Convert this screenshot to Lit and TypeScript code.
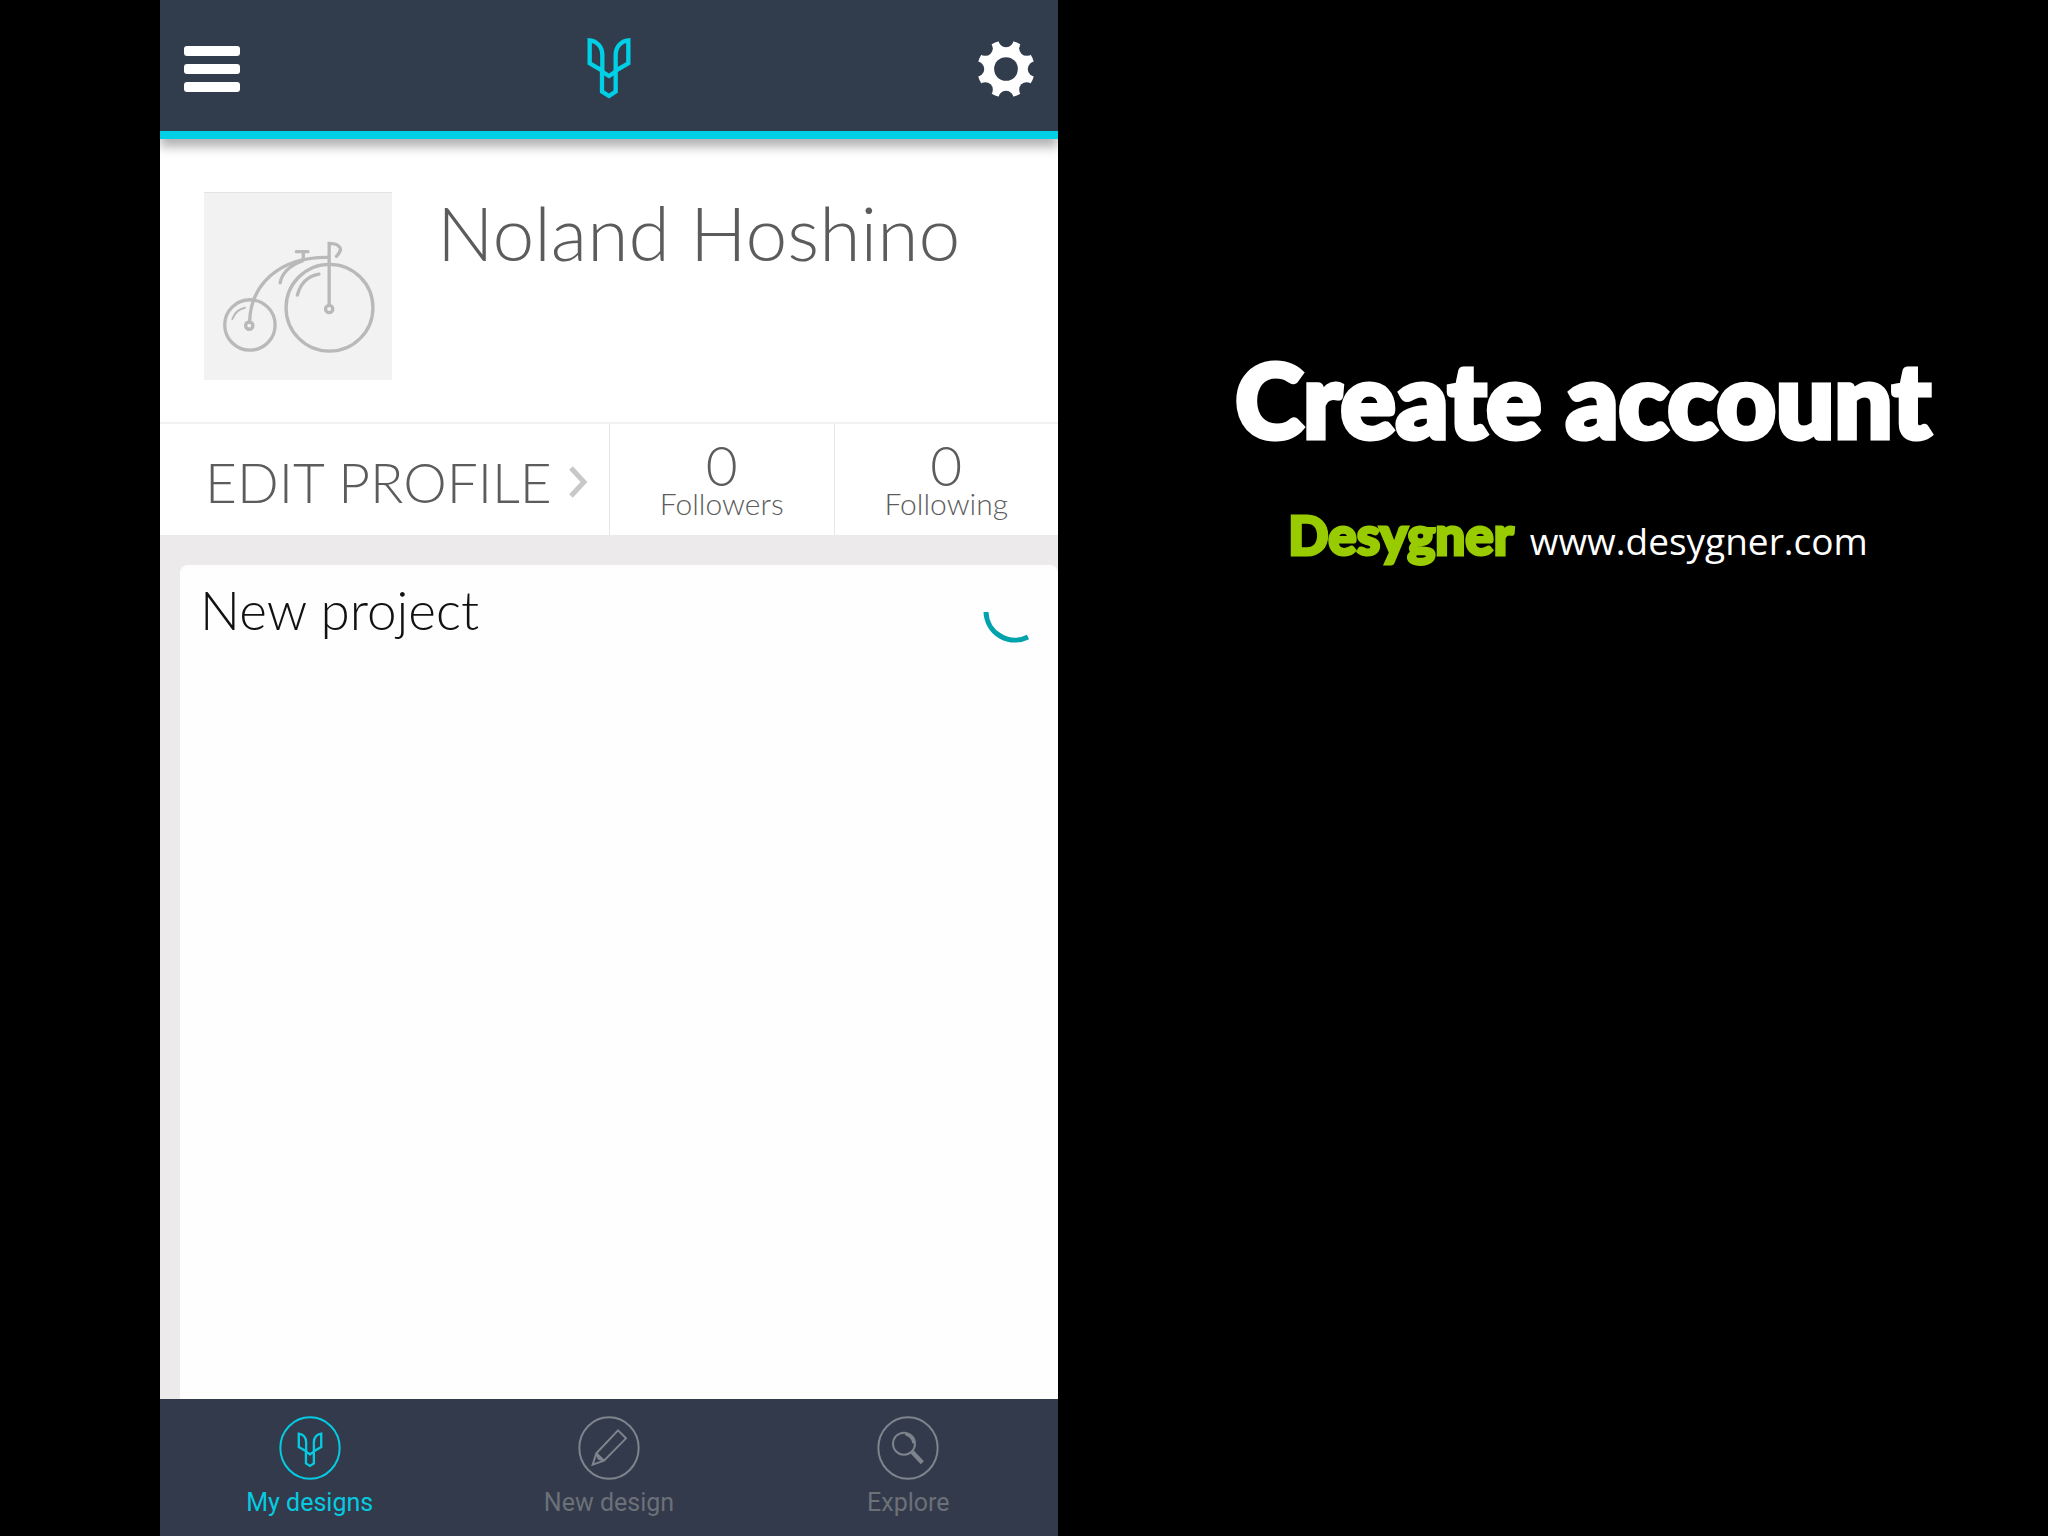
import { LitElement, html, css, svg } from "lit";
import { customElement } from "lit/decorators.js";

const mark = svg`
  <path d="M1320 122C1342 124 1358 142 1358 166V213L1320 191Z" />
  <path d="M1436 122C1414 124 1398 142 1398 166V213L1436 191Z" />
  <path d="M1357 213V276L1378 289L1398 276V213" />
  <path d="M1357 216L1378 229L1398 216" />`;

const tabs = [
  {
    label: "My designs",
    active: true,
    icon: svg`<g transform="translate(462 209) scale(.58) translate(-1378 -205)" stroke-width="12">${mark}</g>`,
  },
  {
    label: "New design",
    active: false,
    icon: svg`<path stroke-width="6" d="M413 254L424 220L489 151L513 175L447 242ZM424 220L447 242M424 220L431 236L447 242" />`,
  },
  {
    label: "Explore",
    active: false,
    icon: svg`
      <circle cx="450" cy="191" r="33" stroke-width="6" />
      <path stroke-width="8" d="M454 162Q476 169 479 190" />
      <path stroke-width="13" d="M474 215L505 248" />`,
  },
];

@customElement("app-root")
export class AppRoot extends LitElement {
  static styles = css`
    :host {
      display: block;
      background: #000;
      font-family: Lato, "Liberation Sans", sans-serif;
    }
    * {
      box-sizing: border-box;
    }
    a {
      color: inherit;
      text-decoration: none;
    }
    button {
      display: flex;
      padding: 0;
      border: 0;
      background: none;
      color: inherit;
      font: inherit;
    }
    h1,
    h2,
    p,
    dl,
    dd {
      margin: 0;
      font-weight: inherit;
    }
    .page {
      display: grid;
      grid-template-columns: 160fr 898fr 990fr;
      min-height: 100vh;
    }
    .phone {
      grid-column: 2;
      display: flex;
      flex-direction: column;
      background: #edeaeb;
      color: #5c5c5c;
    }
    .bar {
      display: flex;
      justify-content: space-between;
      align-items: center;
      height: 139px;
      padding: 0 24px;
      background: #313c4c;
      border-bottom: 8px solid #00d0e6;
      box-shadow: 0 8px 10px rgba(0, 0, 0, 0.3);
      clip-path: inset(0 0 -24px 0);
      z-index: 1;
    }
    .menu {
      flex-direction: column;
      justify-content: space-between;
      width: 56px;
      height: 46px;
      margin-top: 6px;
    }
    .line {
      height: 10px;
      width: 100%;
      border-radius: 3px;
      background: #fff;
    }
    .brand {
      display: flex;
      margin-top: 6px;
    }
    .mark {
      width: 46px;
      height: 63px;
    }
    .stroke {
      fill: none;
      stroke: currentColor;
    }
    .cyan {
      color: #00d0e6;
    }
    .gear {
      margin-top: 6px;
    }
    .gear svg {
      width: 56px;
      height: 56px;
    }
    .profile {
      display: flex;
      gap: 45px;
      padding: 53px 44px 42px;
      background: #fff;
    }
    .avatar {
      width: 188px;
      height: 188px;
      background: #f2f2f2;
      border-top: 1px solid #e4e4e4;
      color: #b9b9b9;
    }
    .name {
      font-size: 75px;
      line-height: 80px;
      font-weight: 300;
    }
    .stats {
      display: grid;
      grid-template-columns: 2fr 1fr 1fr;
      height: 113px;
      border-top: 2px solid #f2f2f2;
      background: #fff;
      font-weight: 300;
    }
    .edit {
      display: flex;
      align-items: center;
      gap: 16px;
      padding: 4px 0 0 45px;
      font-size: 55px;
    }
    .chevron {
      width: 20px;
      height: 32px;
      color: #c8c8c8;
    }
    .stat {
      display: flex;
      flex-direction: column-reverse;
      justify-content: flex-end;
      align-items: center;
      padding-top: 16px;
      border-left: 1px solid #e6e6e6;
    }
    .count {
      font-size: 55px;
      line-height: 50px;
    }
    .caption {
      font-size: 30px;
      line-height: 26px;
    }
    .card {
      flex: 1;
      display: flex;
      justify-content: space-between;
      align-items: flex-start;
      margin: 30px 0 0 20px;
      padding: 12px 28px 12px 20px;
      border-radius: 8px 8px 0 0;
      background: #fefefe;
      color: #111;
    }
    .title {
      font-size: 53px;
      line-height: 66px;
      font-weight: 300;
    }
    .spinner {
      width: 48px;
      height: 34px;
      margin-top: 32px;
      color: #00a3ab;
    }
    .tabs {
      display: grid;
      grid-template-columns: repeat(3, 1fr);
      height: 137px;
      background: #323a4c;
      font-family: Roboto, sans-serif;
      font-size: 25px;
      line-height: 32px;
    }
    .tab {
      display: flex;
      flex-direction: column;
      align-items: center;
      gap: 6px;
      padding-top: 16px;
      color: #6c7077;
    }
    .tab.active {
      color: #06cbe0;
    }
    .tab svg {
      width: 64px;
      height: 66px;
    }
    .dim {
      color: #7d848c;
    }
    .aside {
      display: flex;
      flex-direction: column;
      align-items: center;
      padding: 338px 0 0 60px;
      color: #fff;
    }
    .headline {
      font-size: 103px;
      line-height: 120px;
      font-weight: 900;
      -webkit-text-stroke: 5px currentColor;
      white-space: nowrap;
    }
    .credit {
      display: flex;
      align-items: baseline;
      gap: 16px;
      margin-top: 45px;
      padding-right: 10px;
      line-height: 64px;
    }
    .wordmark {
      font-size: 53px;
      font-weight: 900;
      color: #9c0;
      -webkit-text-stroke: 3px currentColor;
    }
    .url {
      font-family: "Open Sans", "Noto Sans", sans-serif;
      font-size: 37px;
    }
  `;

  render() {
    return html`
      <div class="page">
        <main class="phone">
          <header class="bar">
            <button class="menu" aria-label="Menu">
              <span class="line"></span><span class="line"></span><span class="line"></span>
            </button>
            <a class="brand cyan" href="#" aria-label="Desygner">
              <svg class="mark stroke" viewBox="1310 112 136 189" stroke-width="13">${mark}</svg>
            </a>
            <button class="gear" aria-label="Settings">
              <svg viewBox="1253 121 170 170">
                <mask id="teeth">
                  <circle cx="1338" cy="206" r="87" fill="#fff" />
                  <circle cx="1338" cy="206" r="36" fill="#000" />
                  ${[0, 45, 90, 135, 180, 225, 270, 315].map(
                    (a) => svg`<circle cx="1338" cy="117" r="23" fill="#000" transform="rotate(${a} 1338 206)" />`
                  )}
                </mask>
                <rect x="1250" y="118" width="176" height="176" fill="#fff" mask="url(#teeth)" />
              </svg>
            </button>
          </header>

          <section class="profile">
            <svg class="avatar stroke" viewBox="43 36 564 564" stroke-width="10" stroke-linecap="round" role="img" aria-label="Avatar">
              <circle cx="420" cy="382" r="131" />
              <circle cx="180" cy="434" r="76" />
              <circle cx="419" cy="386" r="11" />
              <circle cx="178" cy="436" r="11" />
              <path d="M419 374V188C446 188 454 200 453 208Q450 218 441 227" />
              <path d="M179 424C183 310 270 228 416 230" />
              <path d="M320 213H355M341 214V236" />
              <path d="M271 307Q280 262 338 241" />
              <path d="M323 344Q338 290 388 281" />
              <path stroke-width="6" d="M127 416Q138 387 165 382" />
            </svg>
            <h1 class="name">Noland Hoshino</h1>
          </section>

          <section class="stats">
            <a class="edit" href="#">
              EDIT PROFILE
              <svg class="chevron stroke" viewBox="0 0 20 32" stroke-width="5"><path d="M3 2L16 16L3 30" /></svg>
            </a>
            <dl class="stat"><dt class="caption">Followers</dt><dd class="count">0</dd></dl>
            <dl class="stat"><dt class="caption">Following</dt><dd class="count">0</dd></dl>
          </section>

          <section class="card">
            <h2 class="title">New project</h2>
            <svg class="spinner stroke" viewBox="0 0 48 34" stroke-width="5" role="img" aria-label="Loading">
              <path d="M4 3A29 29 0 0 0 46 28" />
            </svg>
          </section>

          <nav class="tabs">
            ${tabs.map(
              (t) => html`<a class="tab ${t.active ? "active" : ""}" href="#">
                <svg class="stroke ${t.active ? "" : "dim"}" viewBox="368 105 188 198">
                  <ellipse cx="462" cy="204" rx="89" ry="92" stroke-width="6" />
                  ${t.icon}
                </svg>
                <span>${t.label}</span>
              </a>`
            )}
          </nav>
        </main>

        <aside class="aside">
          <h2 class="headline">Create account</h2>
          <p class="credit">
            <span class="wordmark">Desygner</span>
            <a class="url" href="#">www.desygner.com</a>
          </p>
        </aside>
      </div>
    `;
  }
}
